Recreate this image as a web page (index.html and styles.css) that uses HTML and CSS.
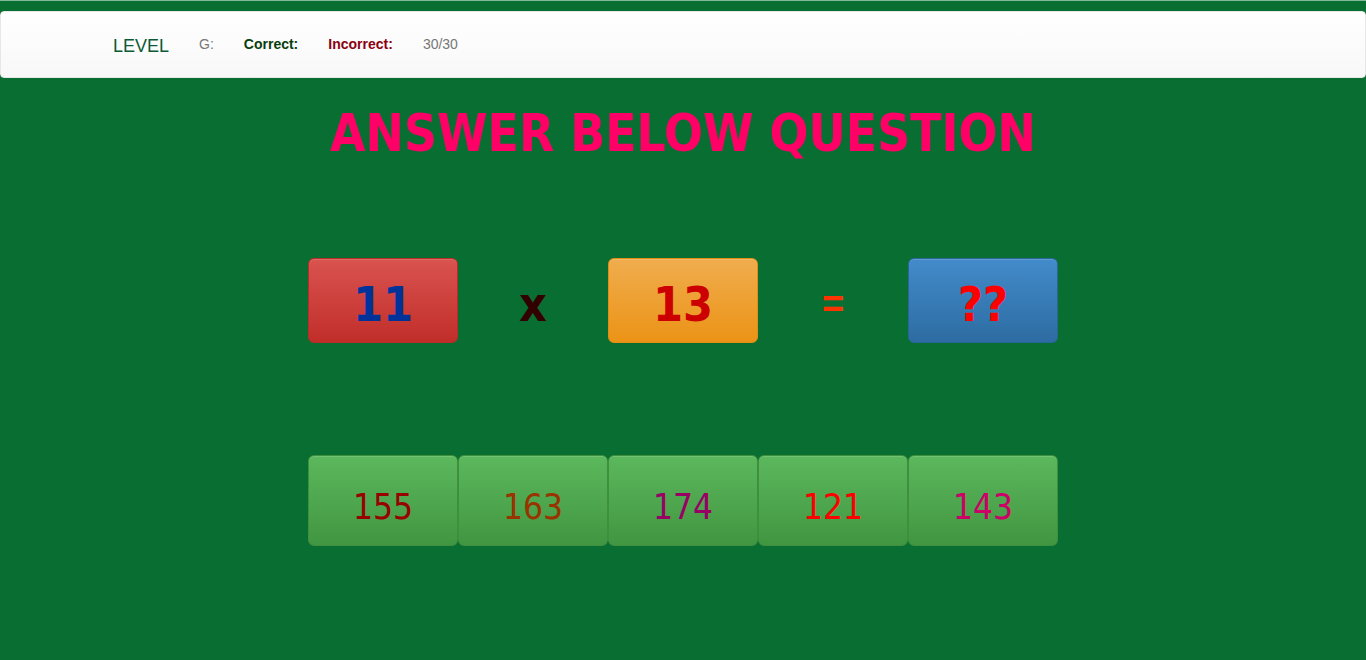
FILE: index.html
```
<!DOCTYPE html>
<html lang="en">
<head>
<meta charset="utf-8">
<meta name="viewport" content="width=device-width, initial-scale=1">
<title>Multiplication Quiz</title>
<link rel="stylesheet" href="styles.css">
</head>
<body>
<nav class="navbar">
  <a class="brand" href="#">LEVEL</a>
  <span class="stat">G:</span>
  <strong class="stat correct">Correct:</strong>
  <strong class="stat incorrect">Incorrect:</strong>
  <span class="stat">30/30</span>
</nav>
<main class="quiz">
  <h1 class="title">ANSWER BELOW QUESTION</h1>
  <div class="question">
    <button type="button" class="tile red">11</button>
    <span class="sign times">x</span>
    <button type="button" class="tile orange">13</button>
    <span class="sign equals">=</span>
    <button type="button" class="tile blue">??</button>
  </div>
  <div class="answers">
    <button type="button" class="answer maroon">155</button>
    <button type="button" class="answer brown">163</button>
    <button type="button" class="answer purple">174</button>
    <button type="button" class="answer scarlet">121</button>
    <button type="button" class="answer magenta">143</button>
  </div>
</main>
</body>
</html>
```
FILE: styles.css
```
* {
  box-sizing: border-box;
}

body {
  margin: 0;
  padding-top: 10px;
  background: #096e32;
  border-top: 1px solid #84b698;
  font-family: "Liberation Sans", Arial, sans-serif;
}

.navbar {
  display: flex;
  align-items: center;
  gap: 30px;
  min-height: 67px;
  padding: 0 112px;
  border: 1px solid #e7e7e7;
  border-radius: 4px;
  background: linear-gradient(#ffffff, #f8f8f8);
  color: #777777;
  font-size: 14px;
  line-height: 20px;
}

.brand {
  padding-top: 2px;
  color: #0b5a36;
  font-size: 18px;
  text-decoration: none;
}

.stat {
  padding-bottom: 2px;
}

.correct {
  color: #083e0c;
}

.incorrect {
  color: #8b0010;
}

.quiz {
  display: flex;
  flex-direction: column;
  align-items: center;
}

.title,
.question {
  font-family: "Comic Sans MS", "DejaVu Sans Condensed", "DejaVu Sans", sans-serif;
  font-size: 51px;
  font-weight: bold;
  line-height: 60px;
}

.title {
  margin: 26px 0 94px;
  color: #ff0066;
  text-align: center;
}

.question,
.answers {
  display: grid;
  grid-template-columns: repeat(5, 1fr);
  width: 100%;
  max-width: 750px;
  text-align: center;
}

.question {
  font-size: 48px;
}

.tile,
.answer {
  padding: 0;
  border: 1px solid;
  border-radius: 6px;
  box-shadow: inset 0 1px 0 rgba(255, 255, 255, 0.15);
  font: inherit;
  cursor: pointer;
}

.tile {
  height: 85px;
  padding-top: 6px;
}

.red {
  border-color: #b92c28;
  background: linear-gradient(#d9534f, #c12e2a);
  color: #003399;
}

.orange {
  border-color: #e38d13;
  background: linear-gradient(#f0ad4e, #eb9316);
  color: #cc0000;
}

.blue {
  border-color: #2b669a;
  background: linear-gradient(#428bca, #2d6ca2);
  color: #ff0000;
}

.sign {
  padding-top: 16px;
}

.times {
  color: #330000;
}

.equals {
  color: #ff3300;
  font-family: "Liberation Sans", Arial, sans-serif;
  font-size: 38px;
}

.answers {
  margin-top: 112px;
  font-family: Tahoma, "DejaVu Sans Condensed", "DejaVu Sans", sans-serif;
  font-size: 35px;
  line-height: 44px;
}

.answer {
  height: 91px;
  padding-top: 12px;
  border-color: #3e8f3e;
  background: linear-gradient(#5cb85c, #419641);
}

.maroon {
  color: #990000;
}

.brown {
  color: #993300;
}

.purple {
  color: #990066;
}

.scarlet {
  color: #ff0000;
}

.magenta {
  color: #cc0066;
}
```
